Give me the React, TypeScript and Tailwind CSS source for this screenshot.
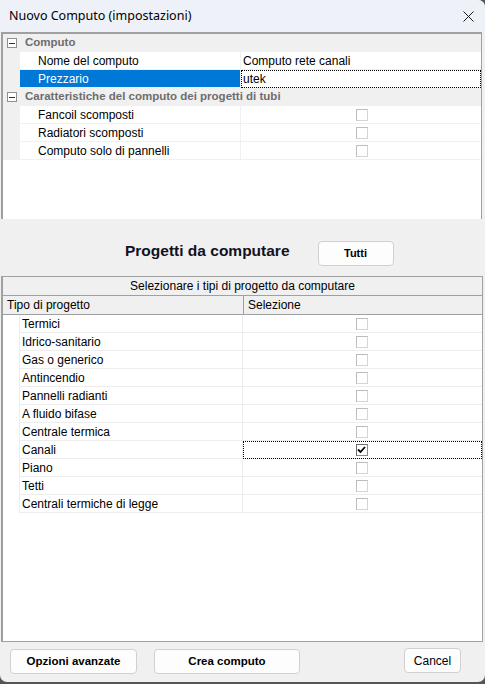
import React from 'react';

type PropRow =
  | { kind: 'cat'; label: string }
  | { kind: 'text'; label: string; value: string; selected?: boolean }
  | { kind: 'check'; label: string; checked?: boolean };

const settingsRows: PropRow[] = [
  { kind: 'cat', label: 'Computo' },
  { kind: 'text', label: 'Nome del computo', value: 'Computo rete canali' },
  { kind: 'text', label: 'Prezzario', value: 'utek', selected: true },
  { kind: 'cat', label: 'Caratteristiche del computo dei progetti di tubi' },
  { kind: 'check', label: 'Fancoil scomposti' },
  { kind: 'check', label: 'Radiatori scomposti' },
  { kind: 'check', label: 'Computo solo di pannelli' },
];

const projectTypes = [
  { label: 'Termici' },
  { label: 'Idrico-sanitario' },
  { label: 'Gas o generico' },
  { label: 'Antincendio' },
  { label: 'Pannelli radianti' },
  { label: 'A fluido bifase' },
  { label: 'Centrale termica' },
  { label: 'Canali', checked: true, focused: true },
  { label: 'Piano' },
  { label: 'Tetti' },
  { label: 'Centrali termiche di legge' },
];

const CheckBox: React.FC<{ checked?: boolean }> = ({ checked }) => (
  <div
    className={`w-[12px] h-[12px] flex items-center justify-center bg-white border ${
      checked ? 'border-[#8a8a8a] border-t-[#6a6a6a] border-l-[#6a6a6a]' : 'border-[#d4d4d4] border-t-[#bcbcbc] border-l-[#bcbcbc]'
    }`}
  >
    {checked && (
      <svg width="9" height="8" viewBox="0 0 9 8">
        <path d="M1 3.5 L3.5 6 L8 1" stroke="#000" strokeWidth="1.8" fill="none" />
      </svg>
    )}
  </div>
);

const MinusBox: React.FC = () => (
  <div className="w-[10px] h-[10px] bg-white border border-[#8f8f8f] flex items-center justify-center">
    <div className="w-[6px] h-[1px] bg-[#333]" />
  </div>
);

const WinButton: React.FC<{ label: string; className?: string; bold?: boolean }> = ({ label, className = '', bold = true }) => (
  <button
    className={`h-[25px] bg-[#fdfdfd] border border-[#d0d0d0] rounded-[4px] text-black ${
      bold ? 'font-bold text-[11.5px]' : 'text-[12px]'
    } ${className}`}
  >
    {label}
  </button>
);

const App: React.FC = () => {
  return (
    <div
      className="w-[485px] h-[684px] bg-[#555] flex flex-col overflow-hidden"
      style={{ fontFamily: '"Liberation Sans", Arial, sans-serif' }}
    >
      <div className="h-[682px] bg-[#f0f0f0] flex flex-col rounded-b-[7px] rounded-tr-[7px] overflow-hidden">
        {/* Title bar */}
        <div className="h-[32px] bg-[#eef2f8] flex items-center justify-between pl-[9px] pr-[11px] shrink-0">
          <span className="text-[12.5px] text-black" style={{ fontFamily: '"Noto Sans", "Open Sans", sans-serif' }}>
            Nuovo Computo (impostazioni)
          </span>
          <svg width="11" height="11" viewBox="0 0 11 11">
            <path d="M0.5 0.5 L10.5 10.5 M10.5 0.5 L0.5 10.5" stroke="#1a1a1a" strokeWidth="1" fill="none" />
          </svg>
        </div>

        {/* Property grid */}
        <div className="ml-[1px] mr-[3px] h-[187px] border-t-2 border-l-2 border-r border-[#a0a0a0] bg-white flex flex-col shrink-0">
          {settingsRows.map((row, i) => {
            if (row.kind === 'cat') {
              return (
                <div key={i} className="h-[18px] bg-[#f0f0f0] flex items-center pl-[4px] gap-[8px]">
                  <MinusBox />
                  <span className="font-bold text-[11.5px] text-[#6d6d6d]">{row.label}</span>
                </div>
              );
            }
            return (
              <div key={i} className="h-[18px] flex text-[12px] text-black">
                <div className="w-[17px] bg-[#f0f0f0]" />
                <div
                  className={`w-[220px] pl-[18px] flex items-center border-b border-[#f0f0f0] ${
                    row.kind === 'text' && row.selected ? 'bg-[#0078d7] text-white' : ''
                  }`}
                >
                  {row.label}
                </div>
                <div className="flex-1 border-l border-[#f0f0f0] border-b flex items-center">
                  {row.kind === 'text' ? (
                    row.selected ? (
                      <div className="w-full h-[18px] border border-dotted border-black flex items-center pl-[1px]">
                        {row.value}
                      </div>
                    ) : (
                      <span className="pl-[2px]">{row.value}</span>
                    )
                  ) : (
                    <div className="w-full flex justify-center pl-[1px]">
                      <CheckBox checked={row.checked} />
                    </div>
                  )}
                </div>
              </div>
            );
          })}
        </div>

        {/* Heading */}
        <div className="h-[57px] shrink-0 flex items-start pt-[22px] pl-[125px] gap-[28px]">
          <div className="h-[20px] flex items-center">
            <span className="font-bold text-[15.5px] text-[#111122]">Progetti da computare</span>
          </div>
          <WinButton label="Tutti" className="w-[76px] h-[20px] text-[11px]" />
        </div>

        {/* Project type grid */}
        <div className="ml-[1px] mr-[2px] h-[366px] border-t border-l-2 border-r border-b border-[#a0a0a0] bg-white flex flex-col shrink-0 text-[12px] text-black">
          <div className="h-[19px] bg-[#f0f0f0] border-b border-[#a0a0a0] flex items-center justify-center">
            Selezionare i tipi di progetto da computare
          </div>
          <div className="h-[19px] bg-[#f0f0f0] border-b border-[#a0a0a0] flex">
            <div className="w-[240px] flex items-center pl-[4px]">Tipo di progetto</div>
            <div className="flex-1 border-l border-[#a0a0a0] flex items-center pl-[4px]">Selezione</div>
          </div>
          {projectTypes.map((p) => (
            <div key={p.label} className="h-[18px] flex">
              <div className="w-[17px] border-r border-[#ededed]" />
              <div className="w-[222px] pl-[2px] flex items-center border-b border-[#ededed]">{p.label}</div>
              <div className="flex-1 border-l border-b border-[#ededed] flex items-center">
                {p.focused ? (
                  <div className="w-full h-[18px] border border-dotted border-black flex items-center justify-center pr-[2px]">
                    <CheckBox checked={p.checked} />
                  </div>
                ) : (
                  <div className="w-full flex justify-center pr-[2px]">
                    <CheckBox checked={p.checked} />
                  </div>
                )}
              </div>
            </div>
          ))}
        </div>

        {/* Bottom buttons */}
        <div className="flex-1 flex items-start pt-[7px] pl-[10px]">
          <WinButton label="Opzioni avanzate" className="w-[127px]" />
          <WinButton label="Crea computo" className="w-[146px] ml-[17px]" />
          <WinButton label="Cancel" bold={false} className="w-[57px] ml-[104px] -mt-[1px]" />
        </div>
      </div>
    </div>
  );
};

export default App;
